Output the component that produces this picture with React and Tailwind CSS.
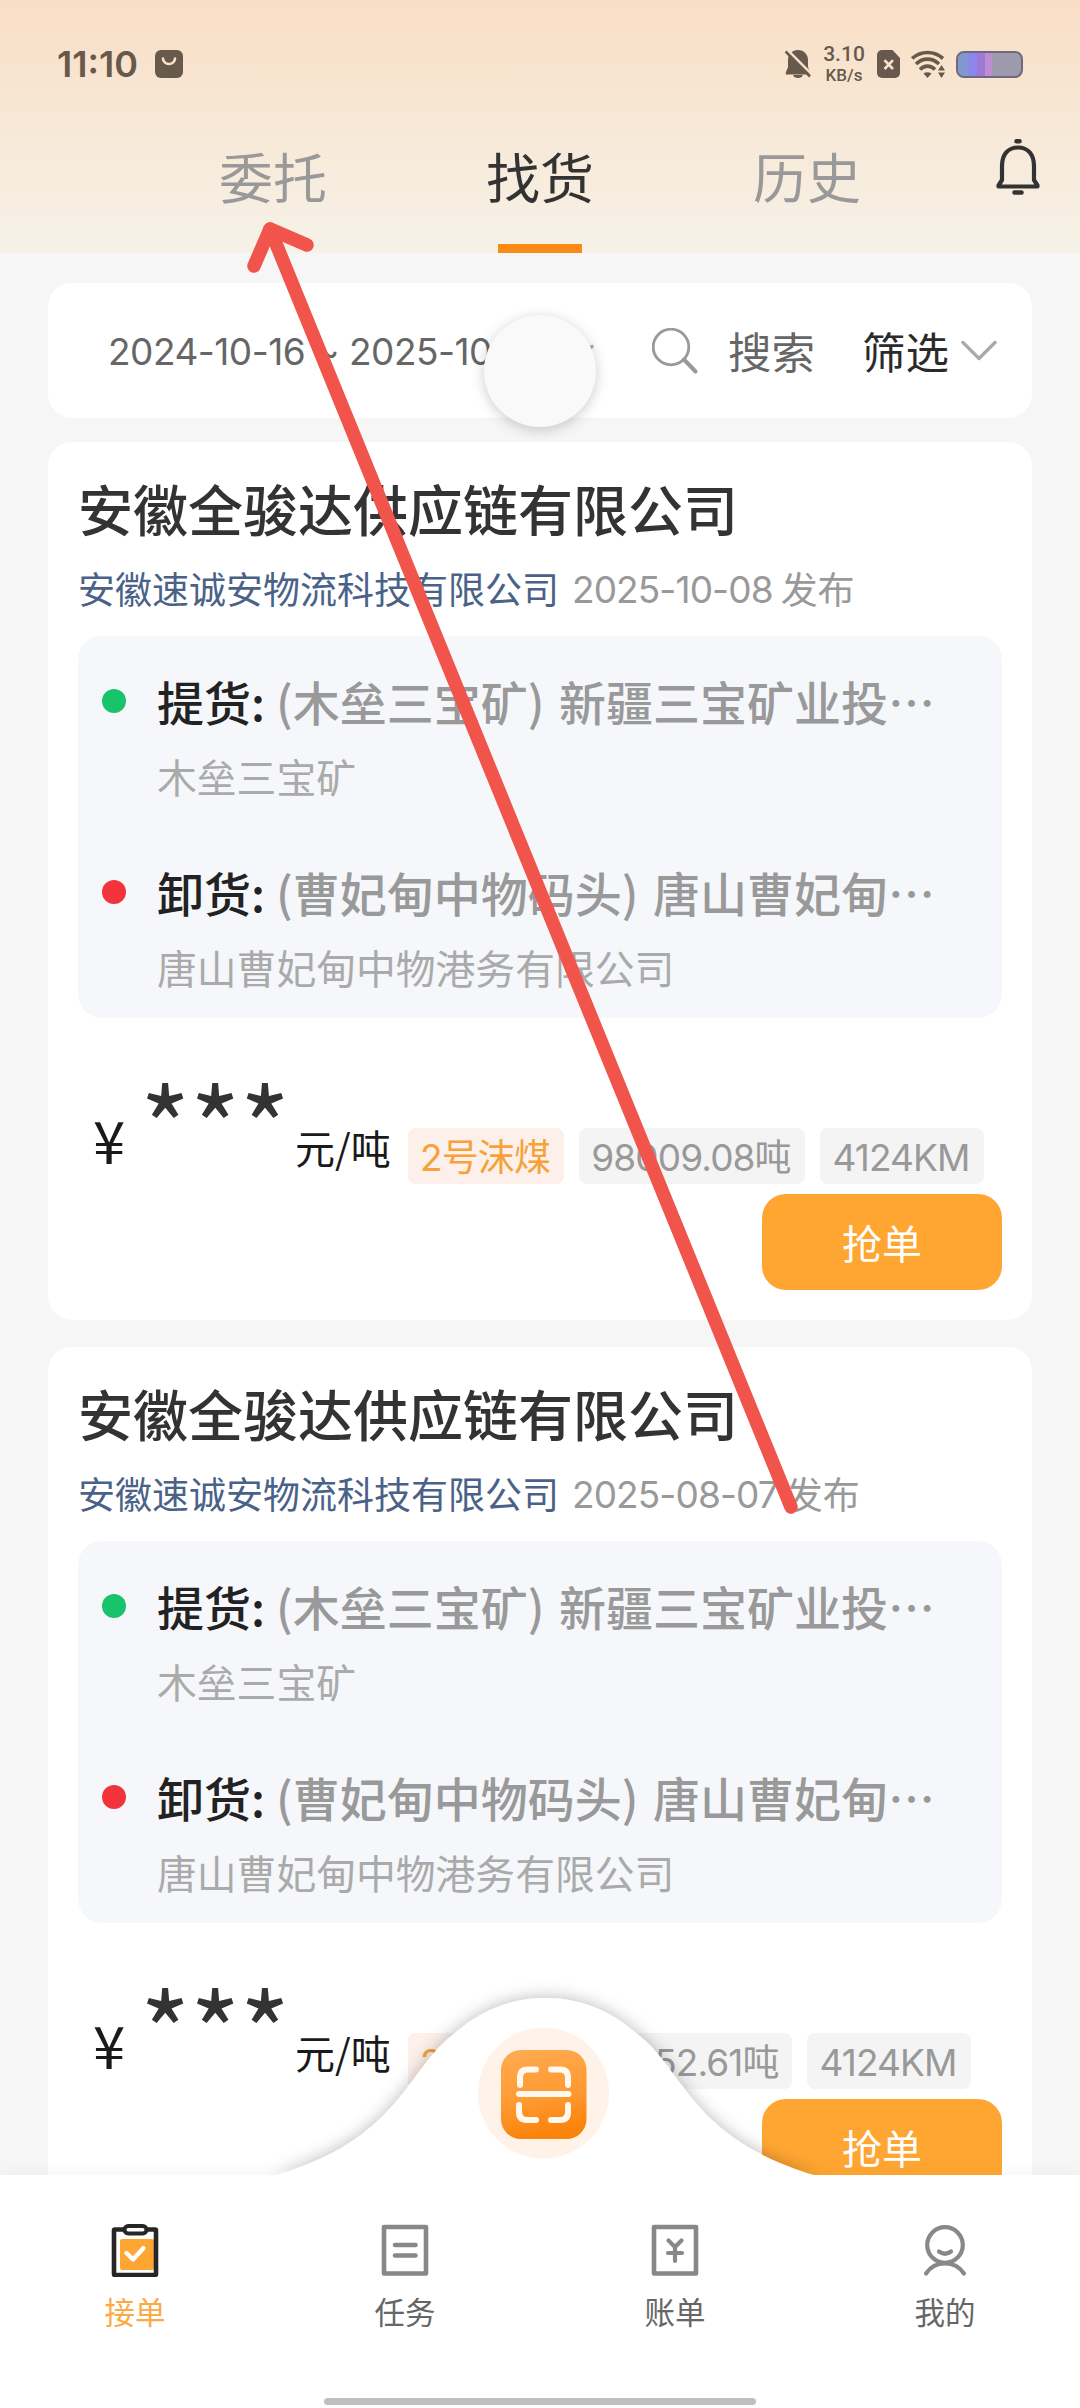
import React from "react";

const orders = [
    {
        company: "安徽全骏达供应链有限公司",
        agent: "安徽速诚安物流科技有限公司",
        date: "2025-10-08",
        goods: "2号沫煤",
        weight: "98009.08吨",
        weightWidth: "w-[226px]",
        distance: "4124KM",
    },
    {
        company: "安徽全骏达供应链有限公司",
        agent: "安徽速诚安物流科技有限公司",
        date: "2025-08-07",
        goods: "2号沫煤",
        weight: "93752.61吨",
        weightWidth: "w-[213px]",
        distance: "4124KM",
    },
];

const StatusBar = () => (
    <div className="flex h-[128px] items-center pl-[57px] pr-[57px] text-[#675a4c]">
        <span className="w-[84px] whitespace-nowrap font-['Inter',sans-serif] text-[36px] font-semibold leading-none">
            11:10
        </span>
        <svg width="28" height="28" viewBox="0 0 28 28" className="ml-[14px]">
            <rect width="28" height="28" rx="6" fill="currentColor" />
            <path
                d="M8 8.500a6 5.500 0 0 0 12 0"
                fill="none"
                stroke="#f9e2cb"
                strokeWidth="2.600"
                strokeLinecap="round"
            />
        </svg>
        <div className="ml-auto flex items-center">
            <svg width="26" height="29" viewBox="0 0 26 29">
                <path
                    d="M13 0C7 0 3 4.500 3 10v7L0.800 22.500V24.500H25.200V22.500L23 17V10C23 4.500 19 0 13 0Z"
                    fill="currentColor"
                />
                <path d="M8 25a5.200 4.200 0 0 0 10 0z" fill="currentColor" />
                <path d="M0 -2.500L28 25.500" stroke="#f9e2cb" strokeWidth="2.600" />
                <path d="M0.500 1.500L25 26.500" stroke="currentColor" strokeWidth="2.600" />
            </svg>
            <div className="ml-[12px] flex w-[42px] flex-col items-center font-['Roboto',sans-serif] font-medium">
                <span className="text-[21px] leading-[22px]">3.10</span>
                <span className="text-[17px] leading-[20px]">KB/s</span>
            </div>
            <svg width="23" height="28" viewBox="0 0 23 28" className="ml-[12px]">
                <path
                    d="M5 0H15.500L23 8V23a5 5 0 0 1-5 5H5a5 5 0 0 1-5-5V5a5 5 0 0 1 5-5z"
                    fill="currentColor"
                />
                <path
                    d="M7.500 10.200L16 19M16 10.200L7.500 19"
                    stroke="#f9e2cb"
                    strokeWidth="2.600"
                />
            </svg>
            <svg width="35" height="28" viewBox="0 0 35 28" className="ml-[11px]" fill="none">
                <g stroke="currentColor" strokeWidth="3.700">
                    <path d="M1.200 8.500C10 0.500 23 0.500 32 8.500" />
                    <path d="M5 14C12 7.500 21 7.500 28 14" />
                    <path d="M9 19.500C13.500 15 19.500 15 24 19.500" />
                </g>
                <path d="M16.500 28L12.500 23.600C15 21.900 18 21.900 20.500 23.600Z" fill="currentColor" />
                <path d="M30.500 15l3.500 5.500h-7zM30.500 28l3.500-5.500h-7z" fill="currentColor" />
            </svg>
            <div className="ml-[10px] flex h-[27px] w-[67px] overflow-hidden rounded-[8px] border-2 border-[#6d6a80] bg-[#9c9aac]">
                <div className="w-[10px] bg-[#8297cb]" />
                <div className="w-[9px] bg-[#8c86ea]" />
                <div className="w-[8px] bg-[#9d79d4]" />
                <div className="w-[7px] bg-[#bf8bd3]" />
            </div>
        </div>
    </div>
);

const Header = () => (
    <header className="relative h-[253px] shrink-0 bg-linear-to-b from-[#f9dec5] to-[#f6f2e8]">
        <StatusBar />
        <div className="flex h-[125px] justify-center text-[54px]">
            {["委托", "找货", "历史"].map((tab) => (
                <div
                    key={tab}
                    className={
                        tab === "找货"
                            ? "flex w-[267px] flex-col items-center justify-between text-[#333]"
                            : "flex w-[267px] flex-col items-center justify-between text-[#999]"
                    }
                >
                    <span className="mt-[8px] leading-[80px]">{tab}</span>
                    {tab === "找货" && <div className="h-[9px] w-[84px] bg-[#fa8c16]" />}
                </div>
            ))}
        </div>
        <svg
            className="absolute left-[995px] top-[138px]"
            width="46"
            height="58"
            viewBox="0 0 46 58"
            fill="none"
            stroke="#333"
            strokeWidth="4.200"
            strokeLinecap="round"
            strokeLinejoin="round"
        >
            <path d="M21.500 3.200h3M19.500 54.500h7" strokeWidth="4.600" />
            <path d="M3.500 47.500L7 42V28C7 16.500 13 9.500 23 9.500S39 16.500 39 28V42L42.500 47.500V48.500H3.500Z" />
        </svg>
    </header>
);

const ChevronDown = ({ className }) => (
    <svg
        className={className}
        width="36"
        height="22"
        viewBox="0 0 36 22"
        fill="none"
        stroke="#aaa"
        strokeWidth="3.400"
        strokeLinecap="round"
        strokeLinejoin="round"
    >
        <path d="M2 2.500L18 18.500L34 2.500" />
    </svg>
);

const SearchBar = () => (
    <div className="relative flex h-[135px] items-center rounded-[24px] bg-white pl-[60px] pr-[35px]">
        <span className="whitespace-pre pt-[3px] font-['Inter',sans-serif] text-[37px] tracking-[-0.5px] text-[#666]">
            2024-10-16 ~ 2025-10-16
        </span>
        <ChevronDown className="absolute left-[510px] top-[61px]" />
        <svg
            className="ml-auto"
            width="46"
            height="46"
            viewBox="0 0 46 46"
            fill="none"
            stroke="#999"
            strokeLinecap="round"
        >
            <circle cx="19" cy="19" r="17.800" strokeWidth="2.800" />
            <path d="M32 31.500L43.500 43.500" strokeWidth="4" />
        </svg>
        <span className="ml-[30px] text-[43.500px] text-[#666]">搜索</span>
        <span className="ml-[47px] text-[43.500px] text-[#2b2b2b]">筛选</span>
        <ChevronDown className="ml-[12px]" />
        {/* Floating assist ball */}
        <div className="absolute left-[436px] top-[32px] z-10 size-[112px] rounded-full bg-[#f9f9f9] shadow-[0_3px_14px_rgba(0,0,0,0.2)]" />
    </div>
);

const RouteStop = ({ dot, label, place, address }) => (
    <div className="flex h-[191px] pl-[24px] pt-[38px]">
        <div className={`mt-[15px] size-[24px] shrink-0 rounded-full ${dot}`} />
        <div className="ml-[31px]">
            <div className="flex h-[54px] items-center whitespace-nowrap text-[47px] font-medium">
                <span className="w-[119px] text-[#222]">{label}:</span>
                <span className="text-[#999] [word-spacing:4px]">{place}…</span>
            </div>
            <div className="mt-[24px] flex h-[48px] items-center text-[39.800px] text-[#aaa]">
                {address}
            </div>
        </div>
    </div>
);

const OrderCard = ({ order }) => (
    <div className="h-[878px] shrink-0 rounded-[24px] bg-white px-[30px] pt-[32px]">
        <h2 className="flex h-[66px] items-center text-[55px] font-medium text-[#333]">
            {order.company}
        </h2>
        <div className="mt-[24px] flex h-[50px] items-center text-[37px]">
            <span className="text-[#4a6288]">{order.agent}</span>
            <span className="ml-[13px] pt-[2px] font-['Inter',sans-serif] text-[37px] tracking-[-0.9px] text-[#999]">
                {order.date}
            </span>
            <span className="ml-[8px] text-[#999]">发布</span>
        </div>
        <div className="mt-[22px] rounded-[24px] bg-[#f5f7fb]">
            <RouteStop
                dot="bg-[#18c36c]"
                label="提货"
                place="(木垒三宝矿) 新疆三宝矿业投"
                address="木垒三宝矿"
            />
            <RouteStop
                dot="bg-[#f2333c]"
                label="卸货"
                place="(曹妃甸中物码头) 唐山曹妃甸"
                address="唐山曹妃甸中物港务有限公司"
            />
        </div>
        <div className="flex h-[176px] pl-[15px] text-[#1a1a1a]">
            <span className="mt-[89px] w-[47px] text-[58px] leading-[64px]">¥</span>
            <span className="mt-[54px] w-[155px] whitespace-nowrap text-[108px] leading-[100px] tracking-[-0.500px] text-[#333]">
                ***
            </span>
            <span className="mt-[104px] w-[113px] text-[40px] leading-[50px]">元/吨</span>
            <div className="mt-[110px] flex gap-[15px] whitespace-nowrap font-['Inter','Noto_Sans_CJK_SC',sans-serif] text-[37px] tracking-[-0.9px]">
                <span className="flex h-[56px] w-[156px] items-center justify-center rounded-[8px] bg-[#fdf0ea] pr-[2px] pt-[3px] text-[#f5a23a]">
                    {order.goods}
                </span>
                <span
                    className={`flex h-[56px] items-center justify-center rounded-[8px] bg-[#f4f4f4] pr-[2px] pt-[3px] text-[#999] ${order.weightWidth}`}
                >
                    {order.weight}
                </span>
                <span className="flex h-[56px] w-[164px] items-center justify-center rounded-[8px] bg-[#f4f4f4] pr-[2px] pt-[3px] text-[#999]">
                    {order.distance}
                </span>
            </div>
        </div>
        <button className="ml-auto flex h-[96px] w-[240px] items-center justify-center rounded-[24px] bg-[#ffa632] text-[40px] text-white">
            抢单
        </button>
    </div>
);

const TaskIcon = () => (
    <svg width="54" height="54" viewBox="0 0 54 54" fill="none" strokeLinejoin="round">
        <rect x="12" y="16" width="34" height="31" rx="2" fill="#ffa632" />
        <rect x="6" y="6.500" width="42" height="45.500" rx="1" stroke="#262626" strokeWidth="4.600" />
        <rect x="16.500" y="3" width="22" height="7.500" rx="3.700" fill="#fff" stroke="#262626" strokeWidth="4" />
        <path d="M18.500 30L25 36.500L35.500 25" stroke="#fff" strokeWidth="4.400" strokeLinecap="round" />
    </svg>
);

const ListIcon = () => (
    <svg width="54" height="54" viewBox="0 0 54 54" fill="none" stroke="#888" strokeWidth="4.600" strokeLinecap="round" strokeLinejoin="round">
        <rect x="6" y="4" width="42" height="46.500" />
        <path d="M17 22h20.500M17 32.500h20.500" />
    </svg>
);

const BillIcon = () => (
    <svg width="54" height="54" viewBox="0 0 54 54" fill="none" stroke="#888" strokeWidth="4.600" strokeLinecap="round" strokeLinejoin="round">
        <rect x="6" y="4" width="42" height="46.500" />
        <path d="M20.500 17.500L27 24L33.500 17.500M20 30h14M27 24v14" strokeWidth="4.200" />
    </svg>
);

const MineIcon = () => (
    <svg width="54" height="54" viewBox="0 0 54 54" fill="none" stroke="#888" strokeWidth="4.200" strokeLinecap="round">
        <circle cx="27" cy="22" r="17.800" />
        <path d="M21 28.500q6 4.500 12 0" />
        <path d="M8 50.500C17 37 37 37 46 50.500" />
    </svg>
);

const navItems = [
    { name: "接单", icon: TaskIcon, active: true },
    { name: "任务", icon: ListIcon },
    { name: "账单", icon: BillIcon },
    { name: "我的", icon: MineIcon },
];

const ScanButton = () => (
    <svg
        className="absolute left-[244px] top-[-207px]"
        width="600"
        height="210"
        viewBox="244 1968 600 210"
    >
        <defs>
            <linearGradient id="scan" x1="0" y1="0" x2="0.2" y2="1">
                <stop offset="0" stopColor="#ffab52" />
                <stop offset="0.600" stopColor="#ff9a32" />
                <stop offset="1" stopColor="#fb840c" />
            </linearGradient>
            <filter id="hump" x="-10%" y="-20%" width="120%" height="130%">
                <feDropShadow dx="0" dy="-1" stdDeviation="8" floodColor="#000" floodOpacity="0.260" />
            </filter>
            <clipPath id="aboveBar">
                <rect x="244" y="1968" width="600" height="207" />
            </clipPath>
        </defs>
        <g clipPath="url(#aboveBar)">
            <path
                d="M270 2177C402 2140 405 2070 455 2033C480 2011 510 1998 545.500 1998S611 2011 636 2033C686 2070 689 2140 821 2177Z"
                fill="#fff"
                filter="url(#hump)"
            />
        </g>
        <circle cx="543.500" cy="2093" r="65.500" fill="#fff2e8" />
        <rect x="501" y="2050" width="85.500" height="89" rx="20" fill="url(#scan)" />
        <path
            d="M536 2069.500h-8q-8 0-8 8v7.500M551 2069.500h9q8 0 8 8v7.500M519 2105v7q0 8 8 8h9M551 2120h9q8 0 8-8v-7M519 2094h49.500"
            fill="none"
            stroke="#fff8ee"
            strokeWidth="6"
            strokeLinecap="round"
        />
    </svg>
);

const BottomNav = () => (
    <nav className="relative flex h-[233px] shrink-0 flex-col items-center bg-white shadow-[0_-4px_16px_rgba(0,0,0,0.03)]">
        <ScanButton />
        <div className="grid w-full grid-cols-4 pt-[48px]">
            {navItems.map((item) => (
                <div key={item.name} className="flex flex-col items-center">
                    <item.icon />
                    <span
                        className={
                            item.active
                                ? "mt-[12px] text-[30.500px] leading-[44px] text-[#fbaa42]"
                                : "mt-[12px] text-[30.500px] leading-[44px] text-[#666]"
                        }
                    >
                        {item.name}
                    </span>
                </div>
            ))}
        </div>
        <div className="mb-[3px] mt-auto h-[7px] w-[432px] rounded-full bg-[#c0c0c0]" />
    </nav>
);

/* Pointer drawn over the page, aimed at the first tab */
const GuideArrow = () => (
    <svg
        className="pointer-events-none absolute left-0 top-0 z-20"
        width="1080"
        height="2408"
        fill="none"
        stroke="#f1544b"
        strokeWidth="13.500"
        strokeLinecap="round"
        strokeLinejoin="round"
    >
        <path d="M791 1507L270 229" />
        <path d="M254 266L270 229L307 245" />
    </svg>
);

const App = () => {
    return (
        <div
            lang="zh-CN"
            className="relative flex h-[2408px] w-[1080px] flex-col overflow-hidden bg-[#f6f6f6] font-['Noto_Sans_CJK_SC',sans-serif]"
        >
            <Header />
            <main className="flex min-h-0 flex-1 flex-col overflow-hidden px-[48px] pt-[30px]">
                <div className="shrink-0">
                    <SearchBar />
                </div>
                <div className="mt-[24px] flex shrink-0 flex-col gap-[27px]">
                    {orders.map((order) => (
                        <OrderCard key={order.date} order={order} />
                    ))}
                </div>
            </main>
            <BottomNav />
            <GuideArrow />
        </div>
    );
};

export default App;
